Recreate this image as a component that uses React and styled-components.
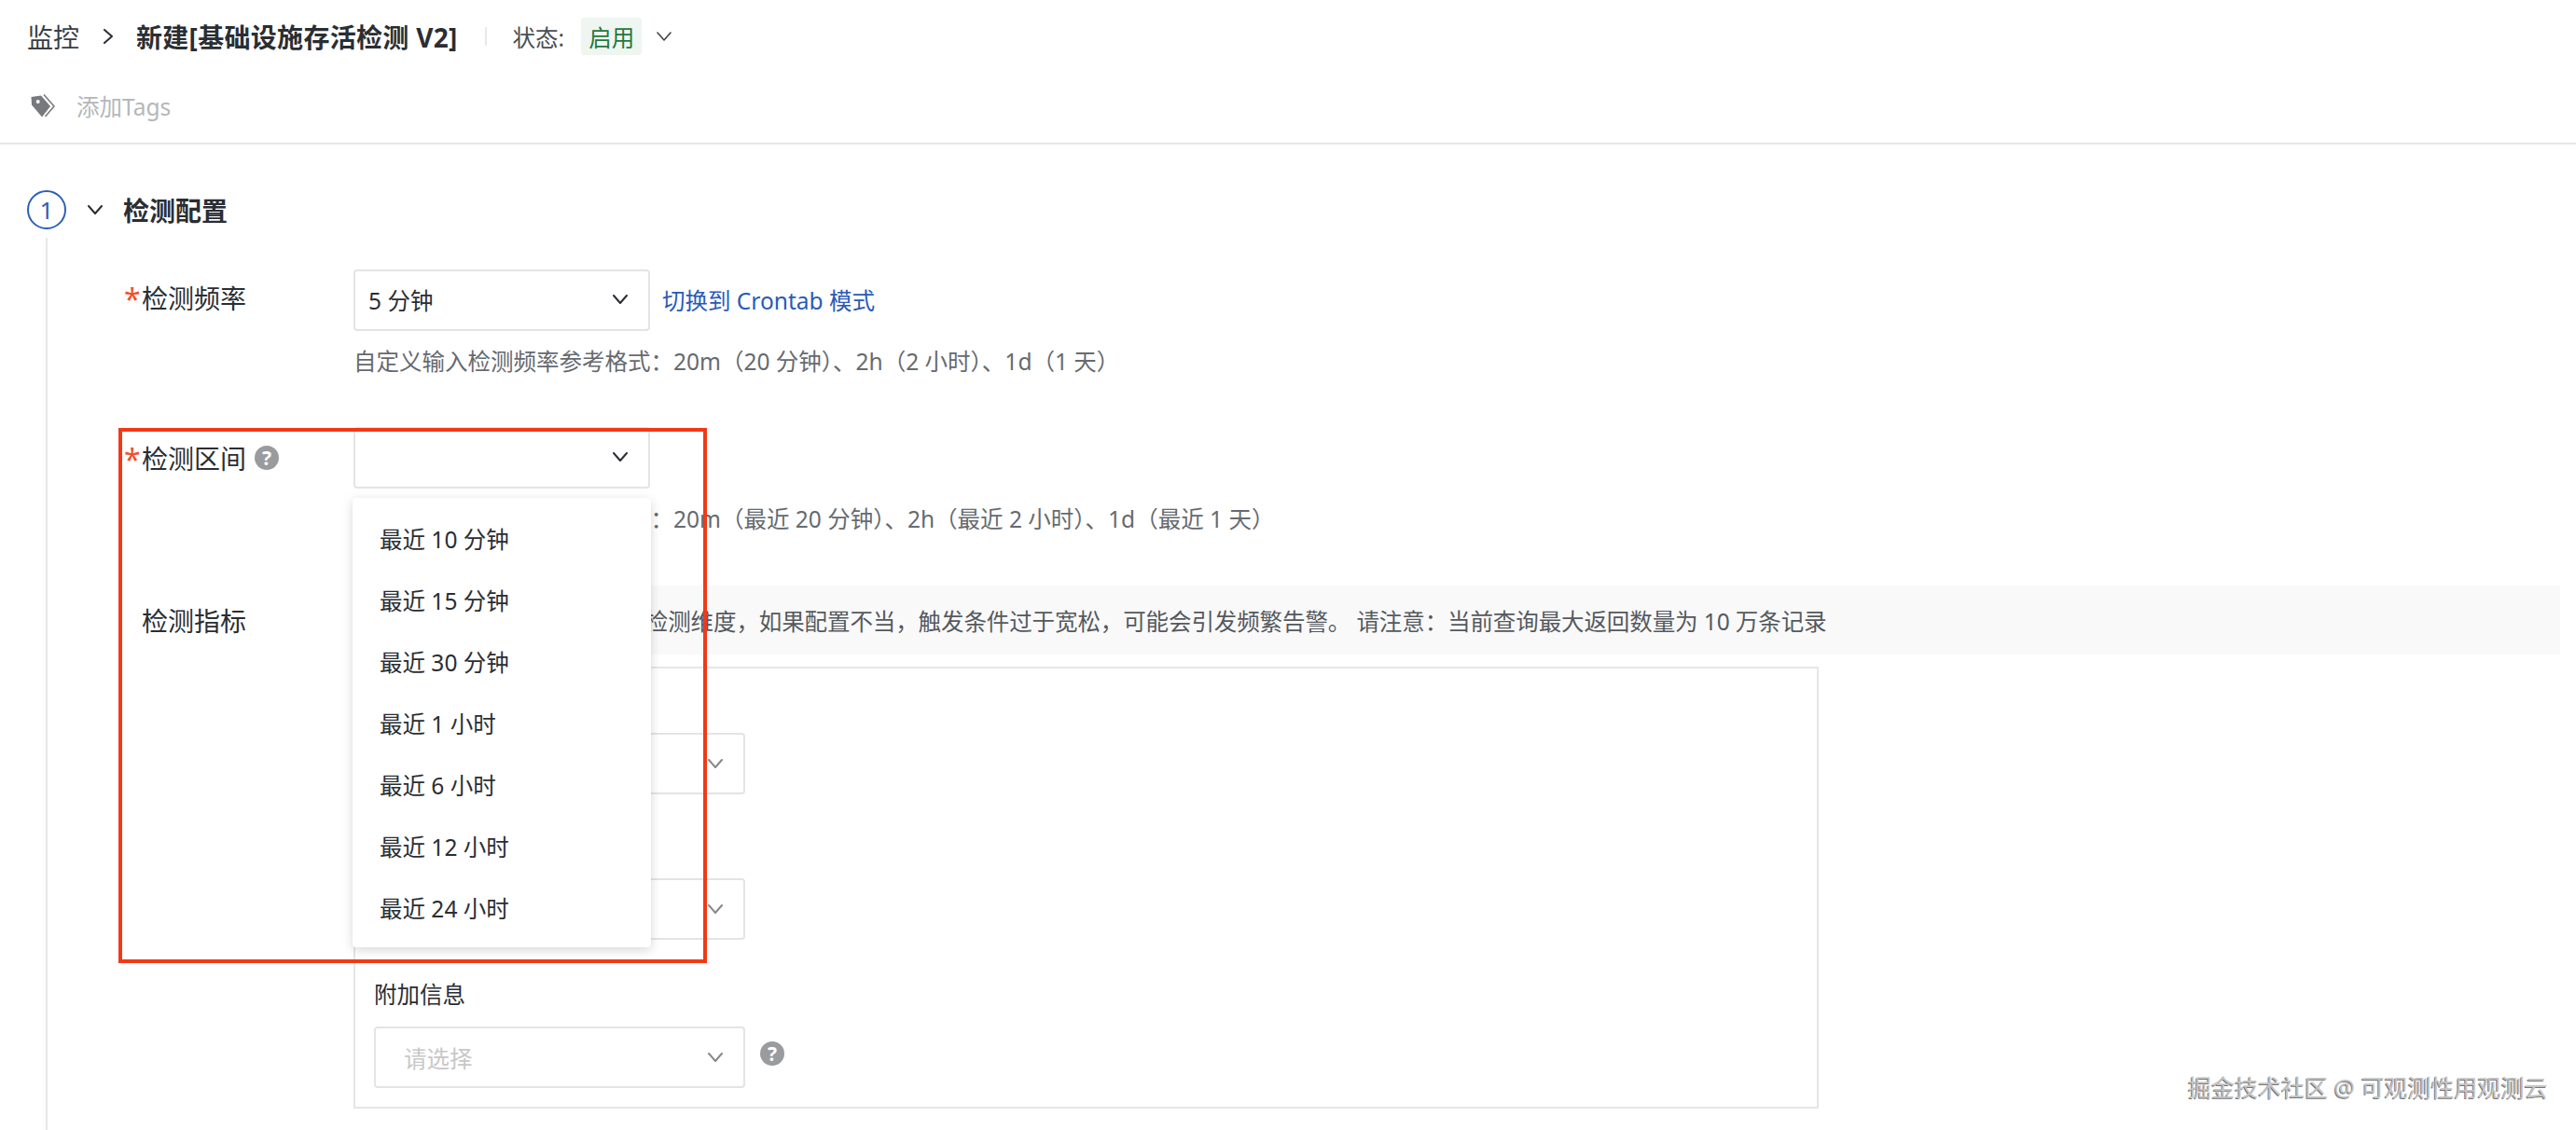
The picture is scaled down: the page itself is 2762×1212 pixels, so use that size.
import React from 'react';
import styled, { createGlobalStyle } from 'styled-components';

const GlobalStyle = createGlobalStyle`
    html, body {
        margin: 0;
        padding: 0;
        background: #fff;
    }
    body {
        font-family: "Noto Sans", "Noto Sans CJK SC", sans-serif;
        color: #2a2e33;
    }
`;

const timeOptions = ['最近 10 分钟', '最近 15 分钟', '最近 30 分钟', '最近 1 小时', '最近 6 小时', '最近 12 小时', '最近 24 小时'];

const Chevron = ({ size = 16, color = '#2a2e33', weight = 2 }) => (
    <svg width={size} height={size * 0.625} viewBox="0 0 16 10" fill="none">
        <path d="M1 1l7 8 7-8" stroke={color} strokeWidth={weight} strokeLinecap="round" strokeLinejoin="round" />
    </svg>
);

const Help = ({ size = 26 }) => (
    <HelpDot $size={size}>?</HelpDot>
);

export default function App() {
    return (
        <Page>
            <GlobalStyle />
            <Header>
                <TitleRow>
                    <Crumb>监控</Crumb>
                    <svg width="12" height="16" viewBox="0 0 12 16" fill="none">
                        <path d="M2 1l8 7-8 7" stroke="#2a2e33" strokeWidth="2" strokeLinecap="round" strokeLinejoin="round" />
                    </svg>
                    <PageTitle>新建[基础设施存活检测 V2]</PageTitle>
                    <VLine />
                    <StatusLabel>状态:</StatusLabel>
                    <StatusTag>启用</StatusTag>
                    <Chevron size={16} color="#444" weight={1.6} />
                </TitleRow>
                <TagsRow>
                    <svg width="26" height="26" viewBox="0 0 26 26" fill="none">
                        <path d="M0.5 4L11 2.5 21 14 12 25.5 1 12.5z" fill="#77797c" />
                        <circle cx="7.7" cy="9" r="2" fill="#fff" />
                        <path d="M14 1.5L25 14 15.5 25" stroke="#77797c" strokeWidth="1.6" />
                    </svg>
                    <TagsHint>添加Tags</TagsHint>
                </TagsRow>
            </Header>

            <Section>
                <StepRow>
                    <StepNumber>1</StepNumber>
                    <Chevron size={16} weight={2} />
                    <StepTitle>检测配置</StepTitle>
                </StepRow>
                <StepBody>
                    <FormRow $top={34}>
                        <FieldLabel $required $offset={-1}>检测频率</FieldLabel>
                        <div>
                            <SelectLine>
                                <Select>
                                    <span>5 分钟</span>
                                    <Chevron />
                                </Select>
                                <SwitchLink>切换到 Crontab 模式</SwitchLink>
                            </SelectLine>
                            <Hint>自定义输入检测频率参考格式：20m（20 分钟）、2h（2 小时）、1d（1 天）</Hint>
                        </div>
                    </FormRow>
                    <FormRow $top={53}>
                        <FieldLabel $required $offset={2}>
                            检测区间
                            <Help />
                        </FieldLabel>
                        <div>
                            <Select>
                                <span />
                                <Chevron />
                            </Select>
                            <Hint>自定义输入检测区间参考格式：20m（最近 20 分钟）、2h（最近 2 小时）、1d（最近 1 天）</Hint>
                        </div>
                    </FormRow>
                    <FormRow $top={54}>
                        <FieldLabel $offset={6}>检测指标</FieldLabel>
                        <div>
                            <Notice>检测指标查询中的分组作为检测维度，如果配置不当，触发条件过于宽松，可能会引发频繁告警。 请注意：当前查询最大返回数量为 10 万条记录</Notice>
                            <MetricBox>
                                <MetricField $height={135}>
                                    <MetricLabel>数据范围</MetricLabel>
                                    <MetricSelect>
                                        <Placeholder>请选择</Placeholder>
                                        <Chevron color="#888" />
                                    </MetricSelect>
                                </MetricField>
                                <MetricField $height={156}>
                                    <MetricLabel>检测维度</MetricLabel>
                                    <MetricSelect>
                                        <Placeholder>请选择</Placeholder>
                                        <Chevron color="#888" />
                                    </MetricSelect>
                                </MetricField>
                                <MetricField $height={159}>
                                    <MetricLabel>附加信息</MetricLabel>
                                    <SelectLine>
                                        <MetricSelect>
                                            <Placeholder>请选择</Placeholder>
                                            <Chevron color="#888" />
                                        </MetricSelect>
                                        <HelpWrap><Help /></HelpWrap>
                                    </SelectLine>
                                </MetricField>
                            </MetricBox>
                        </div>
                    </FormRow>
                </StepBody>
            </Section>

            <Dropdown>
                {timeOptions.map((item) => (
                    <DropdownItem key={item}>{item}</DropdownItem>
                ))}
            </Dropdown>
            <Annotation />
            <Watermark>掘金技术社区 @ 可观测性用观测云</Watermark>
        </Page>
    );
}

const Page = styled.div`
    position: relative;
    width: 2762px;
    height: 1212px;
    overflow: hidden;
    background: #fff;
`;

// header
const Header = styled.header`
    height: 153px;
    border-bottom: 2px solid #e6e6e6;
    padding-left: 29px;
`;

const TitleRow = styled.div`
    display: flex;
    align-items: center;
    height: 40px;
    padding-top: 19px;
`;

const Crumb = styled.span`
    font-size: 28px;
    color: #3a3e44;
    margin-right: 25px;
`;

const PageTitle = styled.span`
    font-size: 28px;
    font-weight: 700;
    letter-spacing: 0.3px;
    margin-left: 24px;
    white-space: nowrap;
`;

const VLine = styled.i`
    width: 2px;
    height: 20px;
    background: #e8e8e8;
    margin: 0 28px 0 29px;
`;

const StatusLabel = styled.span`
    font-size: 24.5px;
    color: #4a4e54;
    margin-right: 18px;
`;

const StatusTag = styled.span`
    display: flex;
    align-items: center;
    height: 40px;
    padding: 0 8px;
    margin-right: 16px;
    font-size: 24.5px;
    color: #1f7a3d;
    background: #eff5f1;
    border-radius: 3px;
`;

const TagsRow = styled.div`
    display: flex;
    align-items: center;
    gap: 23px;
    height: 40px;
    margin-top: 34px;
    padding-left: 4px;
`;

const TagsHint = styled.span`
    font-size: 24.5px;
    color: #b5b7ba;
`;

// step
const Section = styled.section`
    padding-left: 29px;
`;

const StepRow = styled.div`
    display: flex;
    align-items: center;
    height: 44px;
    margin-top: 48px;
`;

const StepNumber = styled.span`
    box-sizing: border-box;
    width: 42px;
    height: 42px;
    margin-right: 23px;
    border: 2px solid #2d5fb8;
    border-radius: 50%;
    display: flex;
    align-items: center;
    justify-content: center;
    font-size: 26px;
    color: #2d5fb8;
`;

const StepTitle = styled.h3`
    margin: 0 0 0 22px;
    font-size: 28px;
    font-weight: 700;
`;

const StepBody = styled.div`
    margin: 8px 0 0 20px;
    padding-left: 82px;
    border-left: 2px solid #e6e6e6;
    height: 960px;
`;

const FormRow = styled.div`
    display: grid;
    grid-template-columns: 246px 1fr;
    padding-top: ${(p) => p.$top}px;
`;

const FieldLabel = styled.label`
    display: flex;
    align-items: center;
    align-self: start;
    height: 62px;
    margin-top: ${(p) => p.$offset || 0}px;
    padding-left: 19px;
    position: relative;
    font-size: 28px;
    white-space: nowrap;
    ${(p) => p.$required && `
        &::before {
            content: '*';
            position: absolute;
            left: 0;
            top: 11px;
            font-size: 32px;
            color: #f0512a;
        }
    `}
`;

const SelectLine = styled.div`
    display: flex;
    align-items: center;
`;

const Select = styled.div`
    box-sizing: border-box;
    width: 318px;
    height: 66px;
    padding: 0 22px 2px 14px;
    display: flex;
    align-items: center;
    justify-content: space-between;
    border: 2px solid #e4e4e4;
    border-radius: 4px;
    font-size: 24.5px;
    background: #fff;
`;

const SwitchLink = styled.a`
    margin: 0 0 2px 13px;
    font-size: 24.5px;
    color: #2a5ab8;
`;

const Hint = styled.p`
    margin: 16px 0 0;
    font-size: 24.5px;
    line-height: 34px;
    color: #666a70;
    white-space: nowrap;
`;

const Notice = styled.div`
    box-sizing: border-box;
    width: 2366px;
    height: 74px;
    padding-left: 20px;
    display: flex;
    align-items: center;
    font-size: 24.5px;
    letter-spacing: -0.1px;
    color: #55595f;
    background: #f9f9f9;
    white-space: pre;
`;

const MetricBox = styled.div`
    box-sizing: border-box;
    width: 1571px;
    height: 474px;
    margin-top: 13px;
    padding: 0 20px;
    border: 2px solid #e6e6e6;
`;

const MetricField = styled.div`
    box-sizing: border-box;
    height: ${(p) => p.$height}px;
    display: flex;
    flex-direction: column;
    justify-content: flex-end;
`;

const MetricLabel = styled.div`
    font-size: 24.5px;
    line-height: 34px;
    margin-bottom: 17px;
`;

const MetricSelect = styled(Select)`
    width: 398px;
    padding: 0 22px 0 30px;
`;

const Placeholder = styled.span`
    color: #c8c8c8;
`;

const HelpWrap = styled.span`
    margin: -8px 0 0 7px;
`;

const HelpDot = styled.span`
    display: inline-flex;
    align-items: center;
    justify-content: center;
    width: ${(p) => p.$size}px;
    height: ${(p) => p.$size}px;
    margin-left: 9px;
    border-radius: 50%;
    background: #999b9e;
    color: #fff;
    font-size: 21px;
    font-weight: 700;
`;

// overlays
const Dropdown = styled.ul`
    position: absolute;
    left: 378px;
    top: 534px;
    width: 320px;
    margin: 0;
    padding: 10px 0;
    list-style: none;
    background: #fff;
    border-radius: 4px;
    box-shadow: 0 3px 12px rgba(0, 0, 0, 0.16);
`;

const DropdownItem = styled.li`
    height: 66px;
    padding-left: 29px;
    display: flex;
    align-items: center;
    font-size: 24.5px;
    color: #2a2e33;
`;

const Annotation = styled.div`
    position: absolute;
    left: 127px;
    top: 459px;
    width: 631px;
    height: 574px;
    box-sizing: border-box;
    border: 4px solid #f03a17;
    pointer-events: none;
`;

const Watermark = styled.div`
    position: absolute;
    left: 2346px;
    top: 1148px;
    font-size: 25px;
    line-height: 36px;
    color: #c4c4c4;
    text-shadow: -1px 1px 0 #777;
    white-space: nowrap;
`;
